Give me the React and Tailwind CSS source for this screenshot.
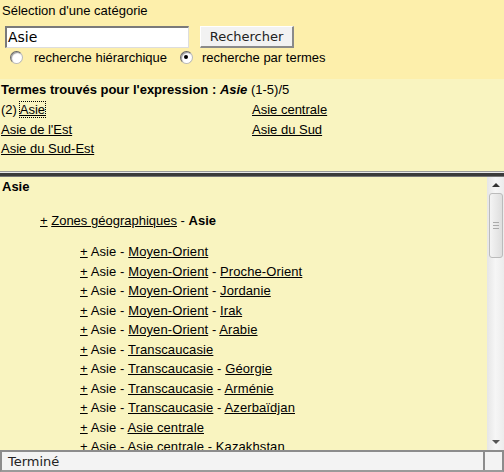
import { useState } from 'react';

const items = [
    [['Moyen-Orient']],
    [['Moyen-Orient'], ['Proche-Orient']],
    [['Moyen-Orient'], ['Jordanie']],
    [['Moyen-Orient'], ['Irak']],
    [['Moyen-Orient'], ['Arabie']],
    [['Transcaucasie']],
    [['Transcaucasie'], ['Géorgie']],
    [['Transcaucasie'], ['Arménie']],
    [['Transcaucasie'], ['Azerbaïdjan']],
    [['Asie centrale']],
    [['Asie centrale'], ['Kazakhstan']],
];

function Radio({ checked, onClick }) {
    return (
        <span
            onClick={onClick}
            className="inline-flex w-[13px] h-[13px] rounded-full items-center justify-center bg-white border border-[#b8b8b8] border-t-[#666] border-l-[#666] shadow-[inset_1px_1px_1px_#999]"
        >
            {checked && <span className="w-[4px] h-[4px] rounded-full bg-black" />}
        </span>
    );
}

function Scrollbar() {
    return (
        <div className="w-[17px] shrink-0 flex flex-col items-center bg-gradient-to-r from-[#e6e6e6] via-[#f6f6f6] to-[#ececec]">
            <div className="h-[16px] flex items-center justify-center">
                <span className="w-0 h-0 border-l-[4px] border-r-[4px] border-b-[4px] border-l-transparent border-r-transparent border-b-[#333]" />
            </div>
            <div className="w-[14px] h-[65px] rounded-[3px] border border-[#bbb] bg-gradient-to-r from-[#f4f4f4] to-[#dedede] flex flex-col items-center justify-center gap-[2px]">
                <span className="w-[6px] h-px bg-[#aaa]" />
                <span className="w-[6px] h-px bg-[#aaa]" />
                <span className="w-[6px] h-px bg-[#aaa]" />
            </div>
            <div className="flex-1" />
            <div className="h-[16px] flex items-center justify-center">
                <span className="w-0 h-0 border-l-[4px] border-r-[4px] border-t-[4px] border-l-transparent border-r-transparent border-t-[#555]" />
            </div>
        </div>
    );
}

export default function App() {
    const [mode, setMode] = useState('termes');

    return (
        <div className="w-[504px] h-[472px] flex flex-col overflow-hidden text-[13px] text-black font-['Liberation_Sans',Arial,sans-serif]">
            <div className="h-[79px] bg-[#fdefab] px-[2px] pt-[3px]">
                <div className="leading-[16px]">Sélection d'une catégorie</div>
                <div className="flex items-center mt-[7px] ml-[3px]">
                    <div className="w-[184px] h-[22px] bg-white border-t-2 border-l-2 border-[#7a7a7a] border-b border-r border-b-[#ddd] border-r-[#ddd] flex items-center px-[1px] text-[14px] font-['DejaVu_Sans',sans-serif]">
                        Asie
                    </div>
                    <button className="ml-[11px] w-[94px] h-[22px] bg-[#f2f2f2] border border-t-white border-l-white border-b-2 border-r-2 border-b-[#8a8a8a] border-r-[#8a8a8a] text-[13px] text-[#222] font-['DejaVu_Sans',sans-serif]">
                        Rechercher
                    </button>
                </div>
                <div className="flex items-center h-[16px] mt-[2px] ml-[8px]">
                    <span className="-mt-[2px] flex"><Radio checked={mode === 'hier'} onClick={() => setMode('hier')} /></span>
                    <span className="ml-[11px]">recherche hiérarchique</span>
                    <span className="ml-[13px] -mt-[2px] flex"><Radio checked={mode === 'termes'} onClick={() => setMode('termes')} /></span>
                    <span className="ml-[9px]">recherche par termes</span>
                </div>
            </div>

            <div className="h-[92px] bg-[#f9f4c0] px-[1px] pt-[1px]">
                <div className="leading-[20px] font-bold">
                    Termes trouvés pour l'expression : <i>Asie</i> <span className="font-normal">(1-5)/5</span>
                </div>
                <div className="grid grid-cols-[251px_1fr] leading-[19.5px]">
                    <div>(2) <a href="#" className="underline outline-1 outline-dotted outline-black">Asie</a></div>
                    <div><a href="#" className="underline">Asie centrale</a></div>
                    <div><a href="#" className="underline">Asie de l'Est</a></div>
                    <div><a href="#" className="underline">Asie du Sud</a></div>
                    <div><a href="#" className="underline">Asie du Sud-Est</a></div>
                </div>
            </div>

            <div className="h-[6px] bg-[#f9f4c0] flex flex-col">
                <div className="h-px bg-[#9a9a9a]" />
                <div className="h-px bg-[#e8e8e8]" />
                <div className="h-[3px] bg-[#3a3a3a]" />
                <div className="h-px bg-[#777]" />
            </div>

            <div className="flex-1 flex min-h-0 bg-[#f9f4c0]">
                <div className="flex-1 overflow-hidden px-[2px] pt-[2px]">
                    <div className="font-bold leading-[16px]">Asie</div>
                    <div className="pl-[38px] mt-[18px] leading-[16px]">
                        <a href="#" className="underline">+</a>{' '}
                        <a href="#" className="underline">Zones géographiques</a> - <b>Asie</b>
                    </div>
                    <div className="pl-[78px] mt-[13px] leading-[19.5px] whitespace-nowrap tracking-[0.1px]">
                        {items.map((parts, i) => (
                            <div key={i}>
                                <a href="#" className="underline">+</a> Asie
                                {parts.map(([label], j) => (
                                    <span key={j}> - <a href="#" className="underline">{label}</a></span>
                                ))}
                            </div>
                        ))}
                    </div>
                </div>
                <Scrollbar />
            </div>

            <div className="h-[22px] flex bg-[#f3f3f3] border-2 border-[#8c8c8c] border-b-[#9a9a9a]">
                <div className="flex-1 flex items-center px-[6px] text-[13px] text-[#222] font-['DejaVu_Sans',sans-serif] leading-none">
                    Terminé
                </div>
                <div className="w-[19px] border-l-2 border-[#8c8c8c]" />
            </div>
        </div>
    );
}
